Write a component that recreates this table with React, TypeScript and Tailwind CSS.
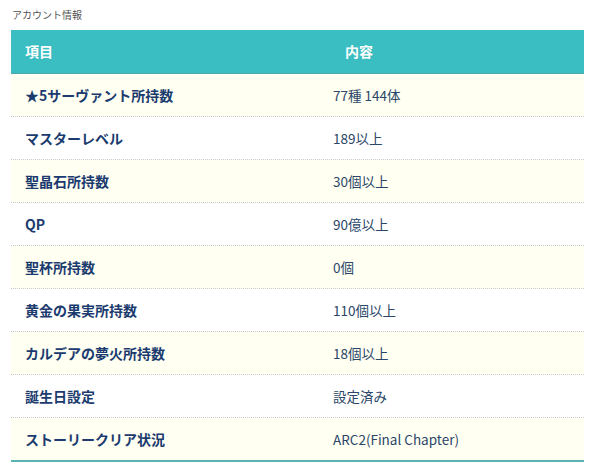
import React from 'react'

const rows: [string, string][] = [
  ['★5サーヴァント所持数', '77種 144体'],
  ['マスターレベル', '189以上'],
  ['聖晶石所持数', '30個以上'],
  ['QP', '90億以上'],
  ['聖杯所持数', '0個'],
  ['黄金の果実所持数', '110個以上'],
  ['カルデアの夢火所持数', '18個以上'],
  ['誕生日設定', '設定済み'],
  ['ストーリークリア状況', 'ARC2(Final Chapter)'],
]

export default function App() {
  return (
    <div
      className="w-[592px] h-[469px] bg-white pt-[9px] pl-[11px] pr-[8px]"
      style={{ fontFamily: '"Noto Sans CJK JP", "Noto Sans", sans-serif' }}
    >
      <div className="text-[10px] leading-[12px] text-[#555] pl-[1px]">アカウント情報</div>
      <div className="mt-[9px] w-[573px]">
        <div className="flex h-[44px] items-center bg-[#3bbec2] border-b border-[#4aa8aa] text-white font-bold text-[14px]">
          <div className="w-[334px] pl-[14px]">項目</div>
          <div className="flex-1">内容</div>
        </div>
        {rows.map(([k, v], i) => {
          const last = i === rows.length - 1
          return (
            <div
              key={k}
              className={
                'flex items-center ' +
                (i % 2 === 0 ? 'bg-[#fffff2] ' : 'bg-white ') +
                (last
                  ? 'h-[44px] border-b-2 border-[#5ab3b3]'
                  : 'h-[43px] border-b border-dotted border-[#c8c8c8]')
              }
            >
              <div className="w-[322px] pl-[14px] font-bold text-[14px] text-[#1b3b6f]">{k}</div>
              <div className="flex-1 text-[13.5px] text-[#2a4668]">{v}</div>
            </div>
          )
        })}
      </div>
    </div>
  )
}
